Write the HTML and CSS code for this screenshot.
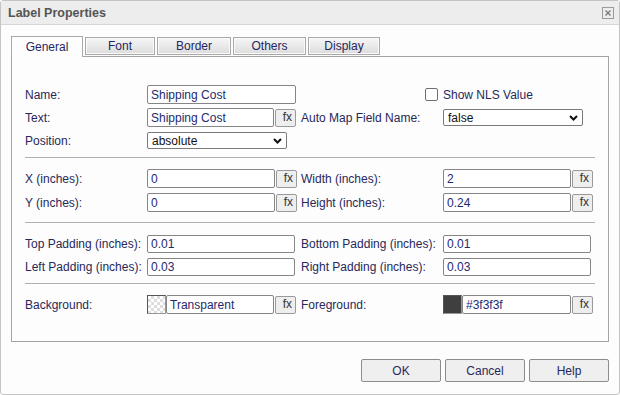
FILE: index.html
```html
<!DOCTYPE html>
<html lang="en">
<head>
  <meta charset="UTF-8">
  <title>Label Properties</title>
  <link rel="stylesheet" href="styles.css">
</head>
<body>

<div class="dialog">
  <div class="titlebar">
    <span class="title">Label Properties</span>
    <span class="close">
      <svg width="12" height="12" viewBox="0 0 12 12">
        <rect x="0.5" y="0.5" width="11" height="11" fill="none" stroke="#9a9a9a"/>
        <path d="M3.5 3.5 L8.5 8.5 M8.5 3.5 L3.5 8.5" stroke="#7a7a7a" stroke-width="1.3"/>
      </svg>
    </span>
  </div>

  <div class="tabs">
    <div class="tab active t-general">General</div>
    <div class="tab t-font">Font</div>
    <div class="tab t-border">Border</div>
    <div class="tab t-others">Others</div>
    <div class="tab t-display">Display</div>
  </div>

  <div class="panel">
    <div class="section first">
      <div class="row">
        <label>Name:</label>
        <div class="ctl"><input class="txt w149" type="text" value="Shipping Cost"></div>
        <div class="chk-cell"><input class="chk" type="checkbox"></div>
        <div class="ctl"><span>Show NLS Value</span></div>
      </div>
      <div class="row">
        <label>Text:</label>
        <div class="ctl"><input class="txt w127" type="text" value="Shipping Cost"><button class="fx">fx</button></div>
        <label>Auto Map Field Name:</label>
        <div class="ctl"><div class="sel">false<svg width="9" height="6" viewBox="0 0 9 6"><path d="M1 1 L4.5 4.5 L8 1" fill="none" stroke="#111" stroke-width="2"/></svg></div></div>
      </div>
      <div class="row">
        <label>Position:</label>
        <div class="ctl"><div class="sel">absolute<svg width="9" height="6" viewBox="0 0 9 6"><path d="M1 1 L4.5 4.5 L8 1" fill="none" stroke="#111" stroke-width="2"/></svg></div></div>
      </div>
    </div>

    <div class="sep"></div>

    <div class="section loose">
      <div class="row">
        <label>X (inches):</label>
        <div class="ctl"><input class="txt w128" type="text" value="0"><button class="fx">fx</button></div>
        <label>Width (inches):</label>
        <div class="ctl"><input class="txt w128" type="text" value="2"><button class="fx">fx</button></div>
      </div>
      <div class="row">
        <label>Y (inches):</label>
        <div class="ctl"><input class="txt w128" type="text" value="0"><button class="fx">fx</button></div>
        <label>Height (inches):</label>
        <div class="ctl"><input class="txt w128" type="text" value="0.24"><button class="fx">fx</button></div>
      </div>
    </div>

    <div class="sep wide"></div>

    <div class="section">
      <div class="row">
        <label>Top Padding (inches):</label>
        <div class="ctl"><input class="txt w148 short" type="text" value="0.01"></div>
        <label>Bottom Padding (inches):</label>
        <div class="ctl"><input class="txt w148 short" type="text" value="0.01"></div>
      </div>
      <div class="row">
        <label>Left Padding (inches):</label>
        <div class="ctl"><input class="txt w148 short" type="text" value="0.03"></div>
        <label>Right Padding (inches):</label>
        <div class="ctl"><input class="txt w148 short" type="text" value="0.03"></div>
      </div>
    </div>

    <div class="sep"></div>

    <div class="section">
      <div class="row">
        <label>Background:</label>
        <div class="ctl"><span class="swatch clear"></span><input class="txt w108" type="text" value="Transparent"><button class="fx">fx</button></div>
        <label>Foreground:</label>
        <div class="ctl"><span class="swatch dark"></span><input class="txt w109" type="text" value="#3f3f3f"><button class="fx">fx</button></div>
      </div>
    </div>
  </div>

  <div class="actions">
    <button class="btn">OK</button>
    <button class="btn">Cancel</button>
    <button class="btn">Help</button>
  </div>
</div>

</body>
</html>
```

FILE: styles.css
```css
body {
  margin: 0;
  font-family: "Liberation Sans", Arial, sans-serif;
  font-size: 12px;
  color: #28285a;
}
.dialog {
  width: 620px;
  height: 395px;
  box-sizing: border-box;
  border: 1px solid #c4c4c4;
  border-radius: 3px;
  background: #fcfdfc;
}
.titlebar {
  height: 23px;
  border-bottom: 1px solid #d6d6d6;
  background: #ecedec;
  display: flex;
  align-items: center;
  justify-content: space-between;
  padding: 0 5px 0 7px;
}
.title {
  font-weight: bold;
  font-size: 12.5px;
  color: #555;
}
.close {
  display: flex;
  margin-top: 1px;
}
.tabs {
  display: flex;
  align-items: flex-end;
  gap: 2px;
  margin: 10px 0 0 10px;
  height: 21px;
  position: relative;
  z-index: 1;
}
.tab {
  box-sizing: border-box;
  height: 18px;
  margin-bottom: 1px;
  border: 1px solid #a9a9a9;
  box-shadow: inset 0 0 0 1px #fafafa;
  background: linear-gradient(#f6f6f6, #dcdcdc);
  text-align: center;
  line-height: 16px;
  color: #262660;
}
.tab.active {
  height: 21px;
  margin-bottom: -1px;
  border-bottom: none;
  box-shadow: none;
  background: #fcfdfc;
  line-height: 21px;
}
.t-general { width: 72px; }
.t-font { width: 70px; }
.t-border { width: 74px; }
.t-others { width: 73px; }
.t-display { width: 72px; }
.panel {
  box-sizing: border-box;
  height: 286px;
  margin: 0 10px;
  border: 1px solid #a4a4a4;
  padding-top: 28px;
}
.section {
  display: flex;
  flex-direction: column;
  gap: 4px;
  padding: 0 13px;
}
.section.loose {
  gap: 5px;
}
.sep {
  height: 1px;
  background: #b0b0b0;
  margin: 7px 13px 11px;
}
.sep.wide {
  margin-top: 10px;
}
.row {
  display: grid;
  grid-template-columns: 122px 154px 142px 1fr;
  align-items: center;
  height: 19px;
}
.row label {
  white-space: nowrap;
}
.ctl {
  display: flex;
  align-items: center;
  height: 19px;
}
.chk-cell {
  display: flex;
  justify-content: flex-end;
  padding-right: 5px;
}
.chk {
  appearance: none;
  width: 13px;
  height: 13px;
  margin: 0;
  border: 1px solid #707070;
  border-radius: 2px;
  background: #fff;
}
.txt {
  box-sizing: border-box;
  height: 19px;
  margin: 0;
  padding: 0 0 0 3px;
  border: 1px solid #858585;
  border-radius: 2px;
  background: #fff;
  font: inherit;
  color: #1e2a6e;
}
.txt.short {
  height: 18px;
}
.w149 { width: 149px; }
.w148 { width: 148px; }
.w128 { width: 128px; }
.w127 { width: 127px; }
.w108 { width: 108px; }
.w109 { width: 109px; }
.fx {
  box-sizing: border-box;
  width: 21px;
  height: 18px;
  margin: 0 0 0 1px;
  padding: 0 3px 1px 0;
  border: 1px solid #9a9a9a;
  border-radius: 2px;
  background: #eeeeee;
  font: inherit;
  font-size: 12px;
  color: #333;
  text-align: right;
}
.sel {
  box-sizing: border-box;
  width: 140px;
  height: 17px;
  padding: 0 4px;
  border: 1px solid #7a7a7a;
  border-radius: 2px;
  background: #fff;
  display: flex;
  align-items: center;
  justify-content: space-between;
  color: #111;
}
.swatch {
  box-sizing: border-box;
  width: 19px;
  height: 19px;
  border: 1px solid #555;
  border-right-color: #999;
  border-bottom-color: #999;
}
.swatch.clear {
  background-color: #fff;
  background-image: conic-gradient(#ddd 25%, #fff 0 50%, #ddd 0 75%, #fff 0);
  background-size: 6px 6px;
}
.swatch.dark {
  background: #3f3f3f;
}
.actions {
  display: flex;
  justify-content: flex-end;
  gap: 4px;
  margin: 17px 10px 0 0;
}
.btn {
  box-sizing: border-box;
  width: 80px;
  height: 23px;
  border: 1px solid #8c8c8c;
  border-radius: 2px;
  background: #efefef;
  font: inherit;
  color: #28285a;
}
```
